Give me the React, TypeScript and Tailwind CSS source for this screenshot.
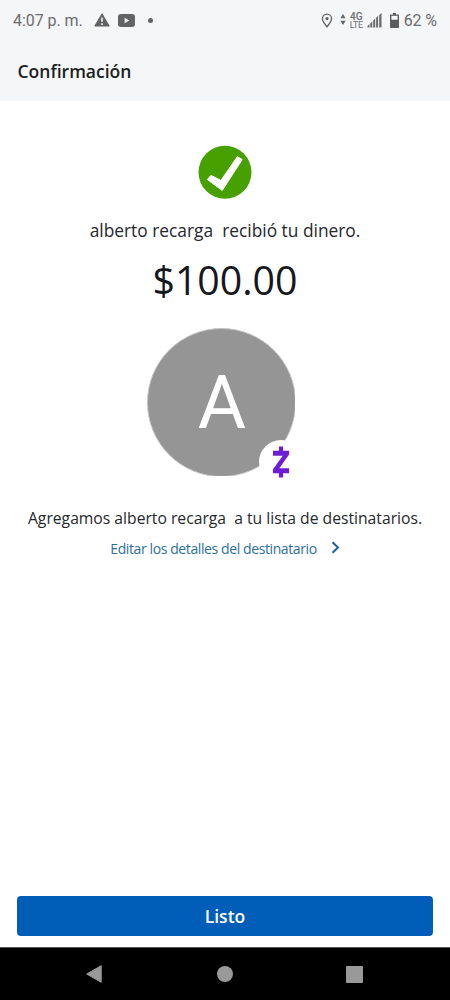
import type { ReactNode } from 'react';

function StatusBar() {
  return (
    <div className="flex h-[42px] items-center justify-between pl-[13px] pr-[13px] text-[#6b6c6e] font-['Roboto',sans-serif]">
      <div className="flex items-center">
        <span className="w-[81px] whitespace-pre text-[16px] leading-none tracking-[-0.05px]">4:07 p. m.</span>
        {/* Warning */}
        <svg width="16" height="14" viewBox="0 0 16 14" className="-mt-[2px]">
          <path d="M8 0.8 15.2 13H0.8Z" fill="#626365" stroke="#626365" strokeLinejoin="round" />
          <path d="M8 4.6v4.2M8 10.2v1.7" stroke="#f6f7f9" strokeWidth="1.6" />
        </svg>
        {/* Video */}
        <svg width="17" height="13" viewBox="0 0 17 13" className="ml-[8px] -mt-[2px]">
          <rect width="17" height="13" rx="3" fill="#626365" />
          <path d="M6.6 3.8v5.4l4.6-2.7Z" fill="#f6f7f9" />
        </svg>
        <span className="ml-[13px] -mt-[2px] size-[5px] rounded-full bg-[#626365]"></span>
      </div>

      <div className="flex items-center">
        {/* Location */}
        <svg width="12" height="15" viewBox="0 0 12 15" className="-mt-[1px]" fill="none" stroke="#626365">
          <path d="M6 13.8C4.3 11.5 1.4 8.4 1.4 5.7a4.6 4.6 0 0 1 9.2 0C10.6 8.4 7.7 11.5 6 13.8Z" strokeWidth="1.3" />
          <circle cx="6" cy="5.6" r="1.6" fill="#626365" stroke="none" />
        </svg>
        {/* Data arrows */}
        <svg width="6" height="11" viewBox="0 0 6 11" className="ml-[7px] -mt-[3px]" fill="#626365">
          <path d="M3 0 5.6 4.3H0.4ZM3 11 0.4 6.7H5.6Z" />
        </svg>
        <span className="ml-[3px] flex w-[15px] flex-col items-center text-[10px] leading-[9px]">
          <span className="font-medium">4G</span>
          <span className="text-[9px] tracking-[-0.4px]">LTE</span>
        </span>
        {/* Signal */}
        <svg width="15" height="15" viewBox="0 0 15 15" className="ml-[3px] -mt-[1px]" fill="#6b6c6e">
          <path d="M0.5 14.5v-1.5l2-1.9v3.4ZM3.3 14.5v-4.2l2-1.9v6.1ZM6.2 14.5V7.5l2-1.9v8.9ZM9.1 14.5v-9.8l2-1.9v11.7ZM12.2 14.5V2l2.3-1.9v14.4Z" />
        </svg>
        {/* Battery */}
        <svg width="9" height="15" viewBox="0 0 9 15" className="ml-[8px] -mt-[1px]">
          <path d="M3 0h3v1.5h2a1 1 0 0 1 1 1V14a1 1 0 0 1-1 1H1a1 1 0 0 1-1-1V2.5a1 1 0 0 1 1-1h2Z" fill="#5b5c5e" />
          <path d="M1.4 2.8h6.2v3.9H1.4Z" fill="#f6f7f9" />
        </svg>
        <span className="ml-[5px] whitespace-pre text-[16px] leading-none tracking-[-0.1px]">62 %</span>
      </div>
    </div>
  );
}

function CheckBadge() {
  return (
    <svg width="54" height="54" viewBox="0 0 54 54">
      <circle cx="27" cy="27.3" r="26.5" fill="#46a000" />
      <path
        d="M9.3 34.5 24.2 45.5 44.2 14.6 39.3 11.7 22.9 35.5 13 30.3Z"
        fill="#fff"
        stroke="#fff"
        strokeLinejoin="round"
      />
    </svg>
  );
}

function Avatar({ letter }: { letter: string }) {
  return (
    <div className="relative h-[148px] w-[156px]">
      <div className="h-[148px] w-[148px] overflow-hidden">
        <div className="flex size-[149px] items-center justify-center rounded-full border border-[#c4c4c4] bg-[#959595]">
          <span className="pl-[1px] pt-[1px] text-[74px] leading-none text-white font-['Roboto',sans-serif]">
            {letter}
          </span>
        </div>
      </div>
      {/* Zelle mark */}
      <div className="absolute left-[112px] top-[112px] flex size-[44px] items-center justify-center rounded-full bg-white">
        <svg width="18" height="32" viewBox="0 0 18 32" fill="#6d1ed4">
          <path d="M6.9 0.5h4.2v4.3h6v3.7L7.3 22.3h9.8v4.9h-6v4.3H6.9v-4.3h-6v-3.7L10.700 9.700H0.900V4.800h6Z" />
        </svg>
      </div>
    </div>
  );
}

function NavItem({ children }: { children: ReactNode }) {
  return (
    <button type="button" className="flex w-[130px] justify-center">
      {children}
    </button>
  );
}

export default function App() {
  return (
    <div className="flex h-[1000px] w-[450px] flex-col overflow-hidden bg-white text-[#25282c] font-['Open_Sans',sans-serif]">
      <header className="h-[101px] bg-[#f5f6f8]">
        <StatusBar />
        <h1 className="pl-[17.5px] pt-[17px] text-[17.5px] font-semibold leading-[24px] text-[#1b1e22]">Confirmación</h1>
      </header>

      <main className="flex flex-1 flex-col items-center pt-[44px]">
        <CheckBadge />
        <p className="mt-[19px] whitespace-pre text-[17.35px] leading-[24px]">alberto recarga  recibió tu dinero.</p>
        <p className="mt-[14px] text-[39.3px] leading-[48px] text-[#15181c]">$100.00</p>
        <div className="mt-[24px]">
          <Avatar letter="A" />
        </div>
        <p className="mt-[30px] whitespace-pre text-[15.7px] leading-[24px]">
          Agregamos alberto recarga  a tu lista de destinatarios.
        </p>
        <a href="#" className="mt-[8px] flex items-center text-[14px] leading-[22px] tracking-[-0.4px] text-[#2c6f9f]">
          Editar los detalles del destinatario
          <svg width="9" height="13" viewBox="0 0 8 12" className="ml-[14px] -mt-[3px]" fill="none">
            <path d="M1.3 1.2 6.3 6 1.3 10.8" stroke="#1a5fa5" strokeWidth="1.8" />
          </svg>
        </a>
      </main>

      <div className="px-[17px] pb-[11px]">
        <button
          type="button"
          className="h-[40px] w-full rounded-[4px] bg-[#005eb8] text-[17.5px] font-semibold leading-[24px] text-white"
        >
          Listo
        </button>
      </div>

      <nav className="flex h-[53px] items-center justify-center border-t border-[#555] bg-black">
        <NavItem>
          <svg width="16" height="18" viewBox="0 0 16 18" className="-ml-[2px]">
            <path d="M15.2 0.7V17.3L0.7 9Z" fill="#999" stroke="#999" strokeLinejoin="round" />
          </svg>
        </NavItem>
        <NavItem>
          <span className="size-[16px] rounded-full bg-[#999]"></span>
        </NavItem>
        <NavItem>
          <span className="mr-[2px] size-[17px] rounded-[1px] bg-[#999]"></span>
        </NavItem>
      </nav>
    </div>
  );
}
